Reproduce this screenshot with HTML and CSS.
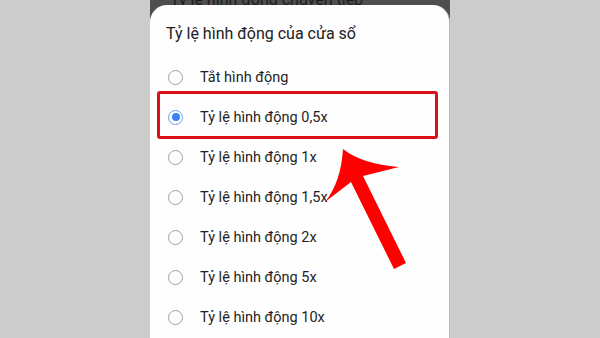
FILE: index.html
```html
<!DOCTYPE html>
<html lang="vi">
<head>
<meta charset="utf-8">
<link rel="stylesheet" href="styles.css">
</head>
<body>
<div class="stage">
  <div class="phone">
    <div class="behind"><span class="behind-text">Tỷ lệ hình động chuyển tiếp</span></div>
    <div class="dialog">
      <div class="title">Tỷ lệ hình động của cửa sổ</div>
      <ul class="options">
        <li class="option"><span class="radio"></span><span class="label">Tắt hình động</span></li>
        <li class="option"><span class="radio checked"></span><span class="label">Tỷ lệ hình động 0,5x</span></li>
        <li class="option"><span class="radio"></span><span class="label">Tỷ lệ hình động 1x</span></li>
        <li class="option"><span class="radio"></span><span class="label">Tỷ lệ hình động 1,5x</span></li>
        <li class="option"><span class="radio"></span><span class="label">Tỷ lệ hình động 2x</span></li>
        <li class="option"><span class="radio"></span><span class="label">Tỷ lệ hình động 5x</span></li>
        <li class="option"><span class="radio"></span><span class="label">Tỷ lệ hình động 10x</span></li>
      </ul>
    </div>
  </div>
</div>
<div class="highlight"></div>
<svg class="arrow" width="600" height="338" viewBox="0 0 600 338">
  <path d="M343,149 Q362,164 399,167 L363,176 L406,263 L394,269 L351,182 L325,202 Q341,182 343,149 Z" fill="#ff0000"/>
</svg>
</body>
</html>
```
FILE: styles.css
```css
html, body {
  margin: 0;
  padding: 0;
}
body {
  width: 600px;
  height: 338px;
  overflow: hidden;
  background: #cccccc;
  font-family: Roboto, "Noto Sans", "Liberation Sans", sans-serif;
  position: relative;
}
.stage {
  display: flex;
  justify-content: center;
  height: 338px;
}
.phone {
  width: 300px;
  margin-left: 0;
  background: #4e4e4e;
  display: flex;
  flex-direction: column;
  height: 338px;
  overflow: hidden;
}
.behind {
  height: 5px;
  position: relative;
  overflow: hidden;
  flex: none;
}
.behind-text {
  position: absolute;
  left: 20px;
  bottom: -3px;
  font-size: 16px;
  line-height: 16px;
  color: #1e1e1e;
  white-space: nowrap;
}
.dialog {
  flex: 1;
  background: #fefefe;
  border-radius: 17px 17px 0 0;
  border-right: 1px solid #b8b8b8;
}
.title {
  padding: 19px 0 13px 16px;
  font-size: 16px;
  line-height: 20px;
  color: #212121;
}
.options {
  list-style: none;
  margin: 0;
  padding: 0;
}
.option {
  height: 40px;
  display: flex;
  align-items: center;
  padding-left: 18px;
  gap: 17px;
}
.radio {
  width: 15px;
  height: 15px;
  box-sizing: border-box;
  border: 1.5px solid #a0a0a0;
  border-radius: 50%;
  flex: none;
  display: flex;
  align-items: center;
  justify-content: center;
}
.radio.checked {
  border-color: #6b9cf0;
}
.radio.checked::after {
  content: "";
  width: 8px;
  height: 8px;
  border-radius: 50%;
  background: #3d7ff2;
}
.label {
  font-size: 14.5px;
  color: #1f1f1f;
  white-space: nowrap;
}
.highlight {
  position: absolute;
  left: 157px;
  top: 91px;
  width: 281px;
  height: 48px;
  box-sizing: border-box;
  border: 3px solid #dc1018;
  border-radius: 3px;
}
.arrow {
  position: absolute;
  left: 0;
  top: 0;
}
```
